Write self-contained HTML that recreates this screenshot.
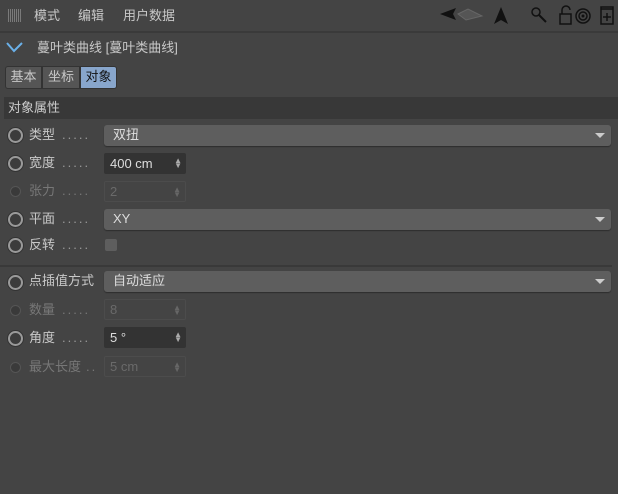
<html><head><style>
body{margin:0;width:618px;height:494px;background:#444;font-family:"Liberation Sans","Noto Sans CJK SC",sans-serif;font-size:13px;line-height:16px;color:#c8c8c8;position:relative;overflow:hidden}
.a{position:absolute}
.rad{position:absolute;left:8px;width:15px;height:15px;border-radius:50%;border:2px solid #9a9a9a;background:#3c3c3c;box-sizing:border-box;box-shadow:0 0 0 1px #333}
.rad.d{border:1px solid #555;background:#3a3a3a;width:11px;height:11px;left:10px;box-shadow:none}
.lbl{position:absolute;left:29px}
.dots{position:absolute;left:62px;color:#999;letter-spacing:2px}
.dd{position:absolute;left:104px;width:507px;height:21px;background:#5e5e5e;border-radius:3px;box-shadow:0 1px 1px #2e2e2e}
.dd span{position:absolute;left:9px;top:2px;color:#ddd}
.dd::after{content:"";position:absolute;right:6px;top:8px;border:5px solid transparent;border-top:5px solid #ccc;border-bottom:0}
.num{position:absolute;left:104px;width:82px;height:21px;background:#333;border-radius:2px}
.num span{position:absolute;left:6px;top:3px;color:#ddd}
.num.d{background:#444;border:1px solid #4c4c4c;box-sizing:border-box}
.num.d span{color:#6a6a6a;top:2px;left:5px}
.num i{position:absolute;right:4px;top:5px;font-style:normal;font-size:8px;line-height:5px;color:#aaa}
.num.d i{color:#666}
.dis{color:#777}
</style></head><body>
<div class="a" style="left:0;top:0;width:618px;height:31px;background:#444;border-bottom:2px solid #3a3a3a"></div>
<div class="a" style="left:8px;top:9px;width:14px;height:13px;background:repeating-linear-gradient(90deg,#888 0 1px,transparent 1px 2px),#444;opacity:.8"></div>
<div class="a" style="left:34px;top:8px">模式</div>
<div class="a" style="left:78px;top:8px">编辑</div>
<div class="a" style="left:123px;top:8px">用户数据</div>
<svg class="a" style="left:436px;top:4px" width="182" height="26">
<path d="M4 10 L20 4 L17 10 L20 16Z" fill="#111"/><path d="M22 10 L32 5 L46 12 L30 16Z" fill="#555" stroke="#666"/>
<path d="M65 3 L72 20 L65 16 L58 20Z" fill="#111"/>
<circle cx="100" cy="8" r="4" fill="none" stroke="#111" stroke-width="1.5"/><path d="M103 11 L110 18" stroke="#111" stroke-width="2"/>
<rect x="124" y="10" width="11" height="10" fill="none" stroke="#111" stroke-width="1.5"/><path d="M126 10 V6 a4 4 0 0 1 8 0" fill="none" stroke="#111" stroke-width="1.5"/>
<circle cx="147" cy="12" r="7" fill="none" stroke="#111" stroke-width="1.5"/><circle cx="147" cy="12" r="4" fill="none" stroke="#111" stroke-width="1.5"/><circle cx="147" cy="12" r="1.5" fill="#111"/>
<rect x="165" y="3" width="12" height="17" fill="none" stroke="#111" stroke-width="1.5"/><path d="M165 5 H177 M171 9 V17 M167 13 H175" stroke="#111" stroke-width="1.5"/>
</svg>
<svg class="a" style="left:6px;top:41px" width="18" height="12"><path d="M1 2 L8 10 L16 2" fill="none" stroke="#6ab0e8" stroke-width="2"/></svg>
<div class="a" style="left:37px;top:40px">蔓叶类曲线 [蔓叶类曲线]</div>
<div class="a" style="left:5px;top:66px;width:112px;height:23px;background:#333;border-radius:3px"></div>
<div class="a" style="left:6px;top:67px;width:35px;height:21px;background:#555;border-radius:2px 0 0 2px;line-height:20px;text-align:center">基本</div>
<div class="a" style="left:43px;top:67px;width:36px;height:21px;background:#555;line-height:20px;text-align:center">坐标</div>
<div class="a" style="left:81px;top:67px;width:35px;height:21px;background:#88a6cc;color:#111;border-radius:0 2px 2px 0;line-height:20px;text-align:center">对象</div>
<div class="a" style="left:4px;top:97px;width:614px;height:22px;background:#383838;line-height:22px"><span style="margin-left:4px;color:#ccc">对象属性</span></div>

<div class="rad" style="top:128px"></div><div class="lbl" style="top:127px">类型</div><div class="dots" style="top:127px">.....</div><div class="dd" style="top:125px"><span>双扭</span></div>
<div class="rad" style="top:156px"></div><div class="lbl" style="top:155px">宽度</div><div class="dots" style="top:155px">.....</div><div class="num" style="top:153px"><span>400 cm</span><i>▲<br>▼</i></div>
<div class="rad d" style="top:186px"></div><div class="lbl dis" style="top:183px">张力</div><div class="dots dis" style="top:183px">.....</div><div class="num d" style="top:181px"><span>2</span><i>▲<br>▼</i></div>
<div class="rad" style="top:212px"></div><div class="lbl" style="top:211px">平面</div><div class="dots" style="top:211px">.....</div><div class="dd" style="top:209px"><span>XY</span></div>
<div class="rad" style="top:238px"></div><div class="lbl" style="top:237px">反转</div><div class="dots" style="top:237px">.....</div><div class="a" style="left:105px;top:239px;width:12px;height:12px;background:#5e5e5e;border-radius:2px"></div>
<div class="a" style="left:0;top:265px;width:612px;height:2px;background:#393939"></div>
<div class="rad" style="top:275px"></div><div class="lbl" style="top:273px">点插值方式</div><div class="dd" style="top:271px"><span>自动适应</span></div>
<div class="rad d" style="top:305px"></div><div class="lbl dis" style="top:302px">数量</div><div class="dots dis" style="top:302px">.....</div><div class="num d" style="top:299px"><span>8</span><i>▲<br>▼</i></div>
<div class="rad" style="top:331px"></div><div class="lbl" style="top:330px">角度</div><div class="dots" style="top:330px">.....</div><div class="num" style="top:327px"><span>5 °</span><i>▲<br>▼</i></div>
<div class="rad d" style="top:362px"></div><div class="lbl dis" style="top:359px">最大长度</div><div class="dots dis" style="top:359px;left:86px">..</div><div class="num d" style="top:356px"><span>5 cm</span><i>▲<br>▼</i></div>
</body></html>
